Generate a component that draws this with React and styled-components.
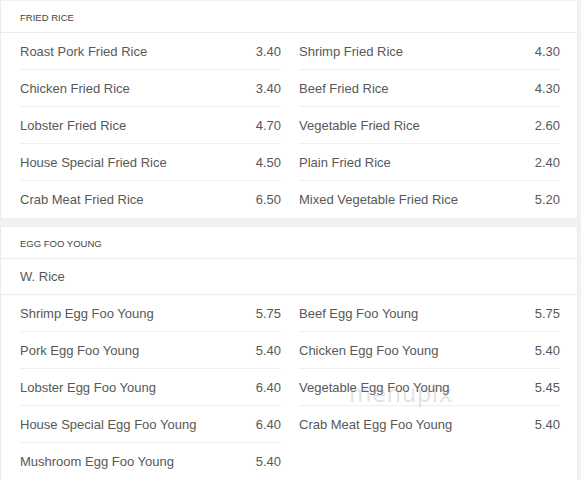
import React from 'react';
import styled, { createGlobalStyle } from 'styled-components';

const GlobalStyle = createGlobalStyle`
  html, body {
    margin: 0;
    padding: 0;
    background: #f1f1f3;
  }
  * { box-sizing: border-box; }
`;

const Page = styled.div`
  position: relative;
  width: 581px;
  height: 480px;
  overflow: hidden;
  background: #f1f1f3;
  font-family: "Liberation Sans", Arial, sans-serif;
  color: #585858;
`;

const Section = styled.section`
  width: 578px;
  background: #fff;
  border: 1px solid #ebebeb;
  border-top-color: #f0f0f0;
  margin-bottom: 7px;
`;

const Header = styled.div`
  height: 32px;
  display: flex;
  align-items: center;
  padding-left: 19px;
  padding-top: 1px;
  font-size: 9.5px;
  text-transform: uppercase;
  color: #444;
  border-bottom: 1px solid #ececec;
`;

const Note = styled.div`
  height: 36px;
  display: flex;
  align-items: center;
  padding-left: 19px;
  font-size: 13px;
  border-bottom: 1px solid #ececec;
`;

const Columns = styled.div`
  display: grid;
  grid-template-columns: 1fr 1fr;
  gap: 18px;
  padding: 0 17px 0 19px;
`;

const List = styled.div`
  display: flex;
  flex-direction: column;
`;

const Item = styled.div`
  height: 37px;
  display: flex;
  align-items: center;
  justify-content: space-between;
  font-size: 13px;
  border-bottom: 1px solid #efefef;

  &:last-child {
    border-bottom: none;
  }
`;

const Price = styled.span`
  color: #585858;
`;

const Watermark = styled.div`
  position: absolute;
  left: 349px;
  top: 381px;
  font-family: "DejaVu Sans", sans-serif;
  font-size: 23px;
  letter-spacing: 0.5px;
  color: rgba(140, 140, 140, 0.26);
  pointer-events: none;
`;

const sections = [
  {
    title: 'Fried Rice',
    columns: [
      [
        ['Roast Pork Fried Rice', '3.40'],
        ['Chicken Fried Rice', '3.40'],
        ['Lobster Fried Rice', '4.70'],
        ['House Special Fried Rice', '4.50'],
        ['Crab Meat Fried Rice', '6.50'],
      ],
      [
        ['Shrimp Fried Rice', '4.30'],
        ['Beef Fried Rice', '4.30'],
        ['Vegetable Fried Rice', '2.60'],
        ['Plain Fried Rice', '2.40'],
        ['Mixed Vegetable Fried Rice', '5.20'],
      ],
    ],
  },
  {
    title: 'Egg Foo Young',
    note: 'W. Rice',
    columns: [
      [
        ['Shrimp Egg Foo Young', '5.75'],
        ['Pork Egg Foo Young', '5.40'],
        ['Lobster Egg Foo Young', '6.40'],
        ['House Special Egg Foo Young', '6.40'],
        ['Mushroom Egg Foo Young', '5.40'],
      ],
      [
        ['Beef Egg Foo Young', '5.75'],
        ['Chicken Egg Foo Young', '5.40'],
        ['Vegetable Egg Foo Young', '5.45'],
        ['Crab Meat Egg Foo Young', '5.40'],
      ],
    ],
  },
];

const App = () => (
  <Page>
    <GlobalStyle />
    {sections.map((s) => (
      <Section key={s.title}>
        <Header>{s.title}</Header>
        {s.note && <Note>{s.note}</Note>}
        <Columns>
          {s.columns.map((col, i) => (
            <List key={i}>
              {col.map(([name, price]) => (
                <Item key={name}>
                  <span>{name}</span>
                  <Price>{price}</Price>
                </Item>
              ))}
            </List>
          ))}
        </Columns>
      </Section>
    ))}
    <Watermark>menupix</Watermark>
  </Page>
);

export default App;
